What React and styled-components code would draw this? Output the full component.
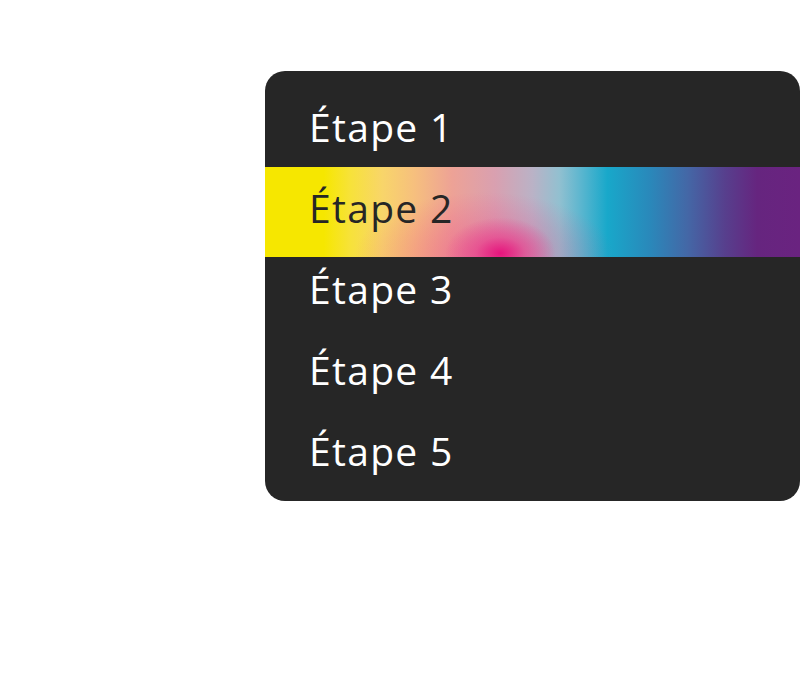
import React from "react";
import styled, { createGlobalStyle } from "styled-components";

const GlobalStyle = createGlobalStyle`
  html, body {
    margin: 0;
    padding: 0;
    background: #ffffff;
  }
  body {
    font-family: "Open Sans", "Liberation Sans", sans-serif;
  }
`;

const steps = ["Étape 1", "Étape 2", "Étape 3", "Étape 4", "Étape 5"];

const App = () => {
  const active = 1;
  return (
    <Page>
      <GlobalStyle />
      <Menu>
        {steps.map((label, i) => (
          <Item key={label} $active={i === active}>
            {label}
          </Item>
        ))}
      </Menu>
    </Page>
  );
};

const Page = styled.div`
  width: 801px;
  height: 675px;
  padding: 71px 0 0 265px;
  box-sizing: border-box;
`;

const Menu = styled.ul`
  list-style: none;
  margin: 0;
  width: 535px;
  height: 430px;
  box-sizing: border-box;
  padding: 14px 0 0;
  background: #262626;
  border-radius: 20px;
  overflow: hidden;
`;

const Item = styled.li`
  height: 81px;
  box-sizing: border-box;
  display: flex;
  align-items: center;
  padding: 2px 0 0 44px;
  font-size: 39px;
  letter-spacing: 1.3px;
  font-weight: 400;
  color: ${(p) => (p.$active ? "#262626" : "#ffffff")};
  ${(p) =>
    p.$active &&
    `
    height: 90px;
    margin: 1px 0 -10px;
    padding-bottom: 9px;
    padding-top: 0;
    background:
      radial-gradient(ellipse 55px 36px at 44% 96%, rgba(230, 20, 125, 1) 0%, rgba(232, 60, 140, 0.6) 45%, rgba(232, 80, 150, 0) 100%),
      radial-gradient(ellipse 130px 65px at 41% 100%, rgba(236, 70, 140, 0.5) 0%, rgba(236, 90, 150, 0) 100%),
      linear-gradient(90deg, #f6e700 0%, #f6e700 11%, #f7e23a 16%, #f8d56a 22%, #f6bf7e 28%, #eda296 35%, #d9a0b0 43%, #bab2c6 50%, #92c0d0 55%, #5cb6cf 59%, #18a8ca 64%, #2a88ba 72%, #4467a6 79%, #573f8d 86%, #66257f 92%, #6a2380 100%);
  `}
`;

export default App;
